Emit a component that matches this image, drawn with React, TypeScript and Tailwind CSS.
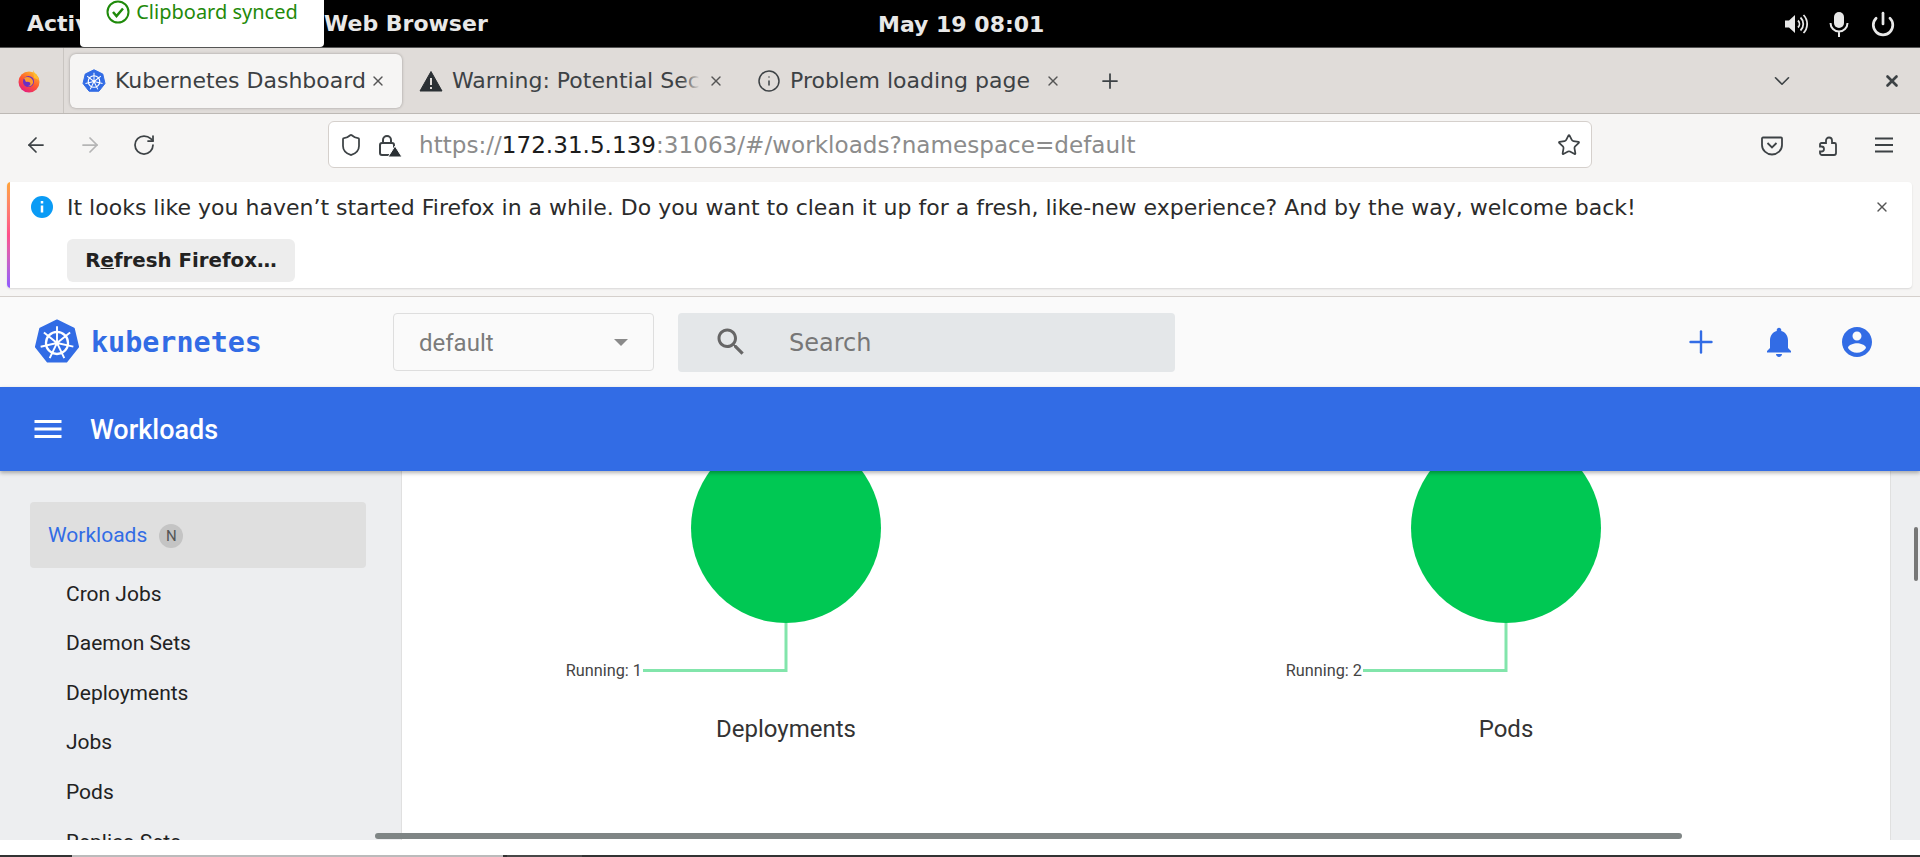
import { ArrowLeft, ArrowRight, Plus, RotateCw, Star, X, ChevronDown, Shield, Info, Power } from 'lucide-react';

const chrome = { fontFamily: '"DejaVu Sans", sans-serif' };
const roboto = { fontFamily: 'Roboto, sans-serif' };

function K8sLogo({ size, fill = '#326ce5' }: { size: number; fill?: string }) {
    const spokes = [0, 51.4, 102.8, 154.3, 205.7, 257.1, 308.6];
    return (
        <svg width={size} height={size} viewBox="0 0 48 48">
            <path d="M24 1.5 41.5 10 46 29 33.8 44.5H14.2L2 29 6.5 10Z" fill={fill} stroke={fill} strokeWidth="2" strokeLinejoin="round" />
            <circle cx="24" cy="25" r="11.5" fill="none" stroke="#fff" strokeWidth="2.4" />
            <circle cx="24" cy="25" r="2.6" fill="#fff" />
            {spokes.map((a) => (
                <line key={a} x1="24" y1="25" x2="24" y2="7.5" stroke="#fff" strokeWidth="2" transform={`rotate(${a} 24 25)`} />
            ))}
        </svg>
    );
}

function FirefoxIcon() {
    return (
        <svg width="24" height="24" viewBox="0 0 24 24">
            <defs>
                <linearGradient id="fx" x1="0.8" y1="0" x2="0.2" y2="1">
                    <stop offset="0" stopColor="#ffbd2e" />
                    <stop offset="0.5" stopColor="#ff5a2c" />
                    <stop offset="1" stopColor="#e31587" />
                </linearGradient>
            </defs>
            <circle cx="12" cy="13" r="10.5" fill="url(#fx)" />
            <path d="M16 1c1 3 5 5 6 10l-5-2Z" fill="#ffbd2e" />
            <circle cx="11.5" cy="12.5" r="5.5" fill="#6a2fc4" />
            <path d="M7 9c3-2 8-1 9 3 .6 3-2 6-5 5 2 0 3-2 2-3.5-1-1-3-1-4-.5Z" fill="#ff9a2e" />
        </svg>
    );
}

function Chart({ label, count }: { label: string; count: number }) {
    return (
        <div className="flex flex-col items-center">
            <svg width="720" height="260" viewBox="0 0 720 260" className="block">
                <circle cx="360" cy="95" r="95" fill="#00c853" />
                <polyline points="360,190 360,237.5 217,237.5" fill="none" stroke="#82e5ab" strokeWidth="3" />
                <text x="216" y="243" textAnchor="end" fontSize="16.3" fill="#444" style={roboto}>{`Running: ${count}`}</text>
            </svg>
            <div className="mt-[18px] text-[24px] text-[#333]" style={roboto}>{label}</div>
        </div>
    );
}

export default function App() {
    return (
        <div className="relative flex h-[857px] w-[1920px] flex-col overflow-hidden bg-white" style={chrome}>
            {/* GNOME top bar */}
            <div className="flex h-[48px] shrink-0 items-center justify-between border-b border-[#555] bg-black pl-[27px] pr-[24px] text-[22px] font-bold text-[#e8e8e8]">
                <div className="flex items-center">
                    <span className="w-[297px]">Activities</span>
                    <span>Web Browser</span>
                </div>
                <span className="absolute left-[878px] top-[8px]">May 19 08:01</span>
                <div className="flex items-center gap-[19px]">
                    <svg width="24" height="24" viewBox="0 0 24 24" fill="none" stroke="#e8e8e8" strokeWidth="1.8">
                        <path d="M1 8.5v7h4l6 5.5V3L5 8.5Z" fill="#e8e8e8" stroke="none" />
                        <path d="M14 8.5a5 5 0 0 1 0 7M16.5 5.5a9 9 0 0 1 0 13M19.5 3a13 13 0 0 1 0 18" />
                    </svg>
                    <svg width="24" height="26" viewBox="0 0 24 26" fill="none" stroke="#e8e8e8" strokeWidth="2">
                        <rect x="7" y="1" width="10" height="16" rx="5" fill="#e8e8e8" stroke="none" />
                        <path d="M3.5 12a8.5 8.5 0 0 0 17 0M12 20.5V26" />
                    </svg>
                    <Power size={26} strokeWidth={2.5} />
                </div>
            </div>

            {/* clipboard toast */}
            <div className="absolute left-[80px] top-0 z-10 flex h-[47px] w-[244px] justify-center rounded-b-sm bg-white text-[20px] text-[#1f8a0a]" style={{ fontFamily: '"Noto Sans", sans-serif' }}>
                <div className="flex h-[24px] items-center gap-[6px]">
                    <svg width="24" height="24" viewBox="0 0 24 24" fill="none" stroke="#1f8a0a" strokeWidth="2">
                        <circle cx="12" cy="12" r="10.5" />
                        <path d="m7 12 3.5 4L17 8.5" strokeWidth="2.5" />
                    </svg>
                    <span>Clipboard synced</span>
                </div>
            </div>

            {/* tab strip */}
            <div className="flex h-[66px] shrink-0 items-center border-b border-[#bdb9b5] bg-[#e0dcd9]">
                <div className="flex h-full w-[64px] shrink-0 items-center justify-center border-r border-[#c9c5c1] pr-[6px]">
                    <FirefoxIcon />
                </div>
                <div className="ml-[6px] flex items-center">
                    <div className="flex h-[54px] w-[332px] items-center rounded-md bg-[#f6f5f4] pl-[12px] shadow-[0_0_3px_rgba(0,0,0,0.3)]">
                        <K8sLogo size={24} />
                        <span className="ml-[9px] whitespace-nowrap text-[22px] text-[#3c4043]">Kubernetes Dashboard</span>
                        <X size={16} className="ml-[4px] shrink-0 text-[#555]" />
                    </div>
                    <div className="ml-[17px] flex items-center">
                        <svg width="24" height="24" viewBox="0 0 24 24" className="shrink-0"><path d="M12 2.5 23 22H1Z" fill="#2b3034" stroke="#2b3034" strokeLinejoin="round" /><path d="M12 9v7M12 18v2" stroke="#e0dcd9" strokeWidth="2" /></svg>
                        <span className="relative ml-[9px] w-[248px] overflow-hidden whitespace-nowrap text-[22px] text-[#3d4245]">
                            Warning: Potential Security Risk
                            <span className="absolute right-0 top-0 h-full w-[18px] bg-gradient-to-r from-transparent to-[#e0dcd9]" />
                        </span>
                        <X size={16} className="ml-[8px] shrink-0 text-[#555]" />
                    </div>
                    <div className="ml-[33px] flex items-center">
                        <Info size={24} strokeWidth={1.5} className="text-[#3d4245]" />
                        <span className="ml-[9px] whitespace-nowrap text-[22px] text-[#3d4245]">Problem loading page</span>
                        <X size={16} className="ml-[15px] text-[#555]" />
                    </div>
                    <Plus size={24} strokeWidth={1.75} className="ml-[37px] text-[#3d4245]" />
                </div>
                <div className="ml-auto flex items-center gap-[88px] pr-[19px]">
                    <ChevronDown size={26} strokeWidth={1.5} className="text-[#3d4245]" />
                    <X size={18} strokeWidth={3.5} className="text-[#3d4245]" />
                </div>
            </div>

            {/* nav bar */}
            <div className="flex h-[68px] shrink-0 items-center bg-[#f6f5f4] pb-[7px] pl-[24px] pr-[18px]">
                <ArrowLeft size={24} strokeWidth={1.75} className="text-[#3d4245]" />
                <ArrowRight size={24} strokeWidth={1.75} className="ml-[30px] text-[#b5b5b5]" />
                <RotateCw size={24} strokeWidth={1.75} className="ml-[30px] text-[#3d4245]" />
                <div className="ml-[172px] flex h-[47px] w-[1264px] items-center rounded-md border border-[#d5d0cc] bg-white pl-[10px] pr-[10px]">
                    <Shield size={24} strokeWidth={1.75} className="text-[#3d4245]" />
                    <svg width="26" height="26" viewBox="0 0 26 26" className="ml-[14px]" fill="none" stroke="#3d4245" strokeWidth="2">
                        <rect x="3" y="11" width="14" height="12" rx="2" />
                        <path d="M6 11V8a4 4 0 0 1 8 0v3" />
                        <path d="M18 14 25 25H11Z" fill="#2b3034" stroke="#fff" strokeWidth="1" />
                    </svg>
                    <div className="ml-[16px] whitespace-nowrap pt-[1px] text-[23.1px] text-[#8c8c8c]">
                        https://<span className="text-[#1c1c1c]">172.31.5.139</span>:31063/#/workloads?namespace=default
                    </div>
                    <Star size={24} strokeWidth={1.75} className="ml-auto text-[#3d4245]" />
                </div>
                <div className="ml-auto flex items-center gap-[32px] pr-[6px]">
                    <svg width="24" height="24" viewBox="0 0 24 24" fill="none" stroke="#3d4245" strokeWidth="1.8">
                        <path d="M3 4.5h18a1 1 0 0 1 1 1V12a10 9.5 0 0 1-20 0V5.5a1 1 0 0 1 1-1Z" />
                        <path d="m7.5 10 4.5 4.5 4.5-4.5" />
                    </svg>
                    <svg width="24" height="24" viewBox="0 0 24 24" fill="none" stroke="#3d4245" strokeWidth="1.8">
                        <path d="M6 22a2 2 0 0 1-2-2v-1.5h1.5a2.5 2.5 0 0 0 0-5H4v-2a1.5 1.5 0 0 1 1.5-1.5H10V7.5a3 3 0 0 1 6 0V10h2.5a1.5 1.5 0 0 1 1.5 1.5V20a2 2 0 0 1-2 2Z" />
                    </svg>
                    <svg width="24" height="24" viewBox="0 0 24 24" fill="none" stroke="#3d4245" strokeWidth="1.8">
                        <path d="M3 5.5h18M3 12h18M3 18.5h18" />
                    </svg>
                </div>
            </div>

            {/* firefox notification */}
            <div className="flex h-[115px] shrink-0 flex-col border-b border-[#d5d0cc] bg-[#f6f5f4] pl-[7px] pr-[8px]">
                <div className="flex h-[106px] overflow-hidden rounded-sm bg-white shadow-[0_1px_2px_rgba(0,0,0,0.12)]">
                    <div className="w-[3px] shrink-0 bg-gradient-to-b from-[#ffa436] via-[#ff4f8a] to-[#9059ff]" />
                    <div className="flex flex-1 flex-col pl-[20px] pt-[12px]">
                        <div className="flex h-[26px] items-center">
                            <svg width="24" height="24" viewBox="0 0 24 24">
                                <circle cx="12" cy="12" r="11" fill="#0a9bf5" />
                                <path d="M12 10.5v7M12 6v2.5" stroke="#fff" strokeWidth="2.5" />
                            </svg>
                            <span className="ml-[13px] whitespace-nowrap text-[22px] text-[#2b2b2b]">It looks like you haven’t started Firefox in a while. Do you want to clean it up for a fresh, like-new experience? And by the way, welcome back!</span>
                            <X size={16} className="ml-auto mr-[22px] shrink-0 text-[#555]" />
                        </div>
                        <div className="ml-[37px] mt-[19px] flex h-[43px] w-[228px] items-center justify-center rounded-md bg-[#ededed] text-[19.8px] font-bold text-[#222]">
                            <span>R<span className="underline">e</span>fresh Firefox…</span>
                        </div>
                    </div>
                </div>
            </div>

            {/* dashboard header */}
            <div className="flex h-[90px] shrink-0 items-center bg-[#fafafa] pl-[34px] pr-[45px]">
                <div className="flex w-[359px] items-center">
                    <K8sLogo size={46} />
                    <span className="ml-[11px] pt-[2px] text-[28.4px] font-bold text-[#326ce5]" style={{ fontFamily: '"DejaVu Sans Mono", monospace' }}>kubernetes</span>
                </div>
                <div className="flex h-[58px] w-[261px] items-center justify-between rounded-sm border border-[#dedede] pl-[25px] pr-[25px] text-[24px] text-[#7b7b7b]">
                    <span className="pt-[1px]" style={roboto}>default</span>
                    <span className="h-0 w-0 border-x-[7px] border-t-[7px] border-x-transparent border-t-[#8a8a8a]" />
                </div>
                <div className="ml-[24px] flex h-[59px] w-[497px] items-center rounded-sm bg-[#e4e7e9] pl-[35px]">
                    <svg width="36" height="36" viewBox="0 0 24 24" fill="#666"><path d="M15.5 14h-.79l-.28-.27C15.41 12.59 16 11.11 16 9.5 16 5.91 13.09 3 9.5 3S3 5.91 3 9.5 5.91 16 9.5 16c1.61 0 3.09-.59 4.23-1.57l.27.28v.79l5 4.99L20.49 19l-4.99-5zm-6 0C7.01 14 5 11.99 5 9.5S7.01 5 9.5 5 14 7.01 14 9.5 11.99 14 9.5 14z" /></svg>
                    <span className="ml-[40px] pt-[1px] text-[24px] text-[#777]">Search</span>
                </div>
                <div className="ml-auto flex items-center gap-[42px] text-[#326ce5]">
                    <Plus size={36} strokeWidth={1.6} />
                    <svg width="36" height="36" viewBox="0 0 24 24" fill="currentColor"><path d="M12 22c1.1 0 2-.9 2-2h-4c0 1.1.9 2 2 2zm6-6v-5c0-3.07-1.63-5.64-4.5-6.32V4c0-.83-.67-1.5-1.5-1.5s-1.5.67-1.5 1.5v.68C7.64 5.36 6 7.92 6 11v5l-2 2v1h16v-1l-2-2z" /></svg>
                    <svg width="36" height="36" viewBox="0 0 24 24" fill="currentColor"><path d="M12 2C6.48 2 2 6.48 2 12s4.48 10 10 10 10-4.48 10-10S17.52 2 12 2zm0 3c1.66 0 3 1.34 3 3s-1.34 3-3 3-3-1.34-3-3 1.34-3 3-3zm0 14.2c-2.5 0-4.71-1.28-6-3.22.03-1.99 4-3.08 6-3.08 1.99 0 5.97 1.09 6 3.08-1.29 1.94-3.5 3.22-6 3.22z" /></svg>
                </div>
            </div>

            {/* blue toolbar */}
            <div className="z-[1] flex h-[84px] shrink-0 items-center bg-[#326ce5] pl-[30px] text-white shadow-[0_2px_4px_rgba(0,0,0,0.3)]">
                <svg width="36" height="36" viewBox="0 0 24 24" fill="currentColor"><path d="M3 18h18v-2H3v2zm0-5h18v-2H3v2zm0-7v2h18V6H3z" /></svg>
                <span className="ml-[24px] pt-[2px] text-[27px] font-medium" style={roboto}>Workloads</span>
            </div>

            <div className="relative flex h-[369px] shrink-0 overflow-hidden" style={roboto}>
                {/* sidebar */}
                <div className="w-[402px] shrink-0 border-r border-[#e0e0e0] bg-[#edeef0] pl-[30px] pt-[31px]">
                    <div className="flex h-[66px] w-[336px] items-center rounded-sm bg-[#dfdfdf] pl-[18px] pt-[2px]">
                        <span className="text-[21px] text-[#326ce5]">Workloads</span>
                        <span className="ml-[12px] flex h-[24px] w-[24px] items-center justify-center rounded-full bg-[#c4c4c4] text-[15px] text-[#555]">N</span>
                    </div>
                    <div className="mt-[1.5px] pl-[36px] text-[21px] text-[#222]">
                        {['Cron Jobs', 'Daemon Sets', 'Deployments', 'Jobs', 'Pods', 'Replica Sets'].map((item) => (
                            <div key={item} className="flex h-[49.6px] items-center">{item}</div>
                        ))}
                    </div>
                </div>
                {/* charts, scrolled so the circles slide under the toolbar */}
                <div className="grid flex-1 grid-cols-2 content-start overflow-hidden bg-white px-[24px]">
                    <div className="mt-[-38px]"><Chart label="Deployments" count={1} /></div>
                    <div className="mt-[-38px]"><Chart label="Pods" count={2} /></div>
                </div>
                <div className="flex w-[30px] shrink-0 justify-end border-l border-[#e0e0e0] bg-[#edeef0] pr-[2px] pt-[56px]">
                    <div className="h-[54px] w-[4px] rounded-full bg-[#777]" />
                </div>
                <div className="absolute bottom-[1px] left-[375px] h-[6px] w-[1307px] rounded-sm bg-[#7f8585]" />
            </div>

            {/* strip of the host below the browser */}
            <div className="h-[15px] shrink-0 bg-white" />
            <div className="flex h-[2px] shrink-0 bg-[#333]">
                <div className="w-[72px]" />
                <div className="w-[431px] bg-[#bbb]" />
                <div className="ml-[4px] w-[75px] bg-[#484848]" />
            </div>
        </div>
    );
}
